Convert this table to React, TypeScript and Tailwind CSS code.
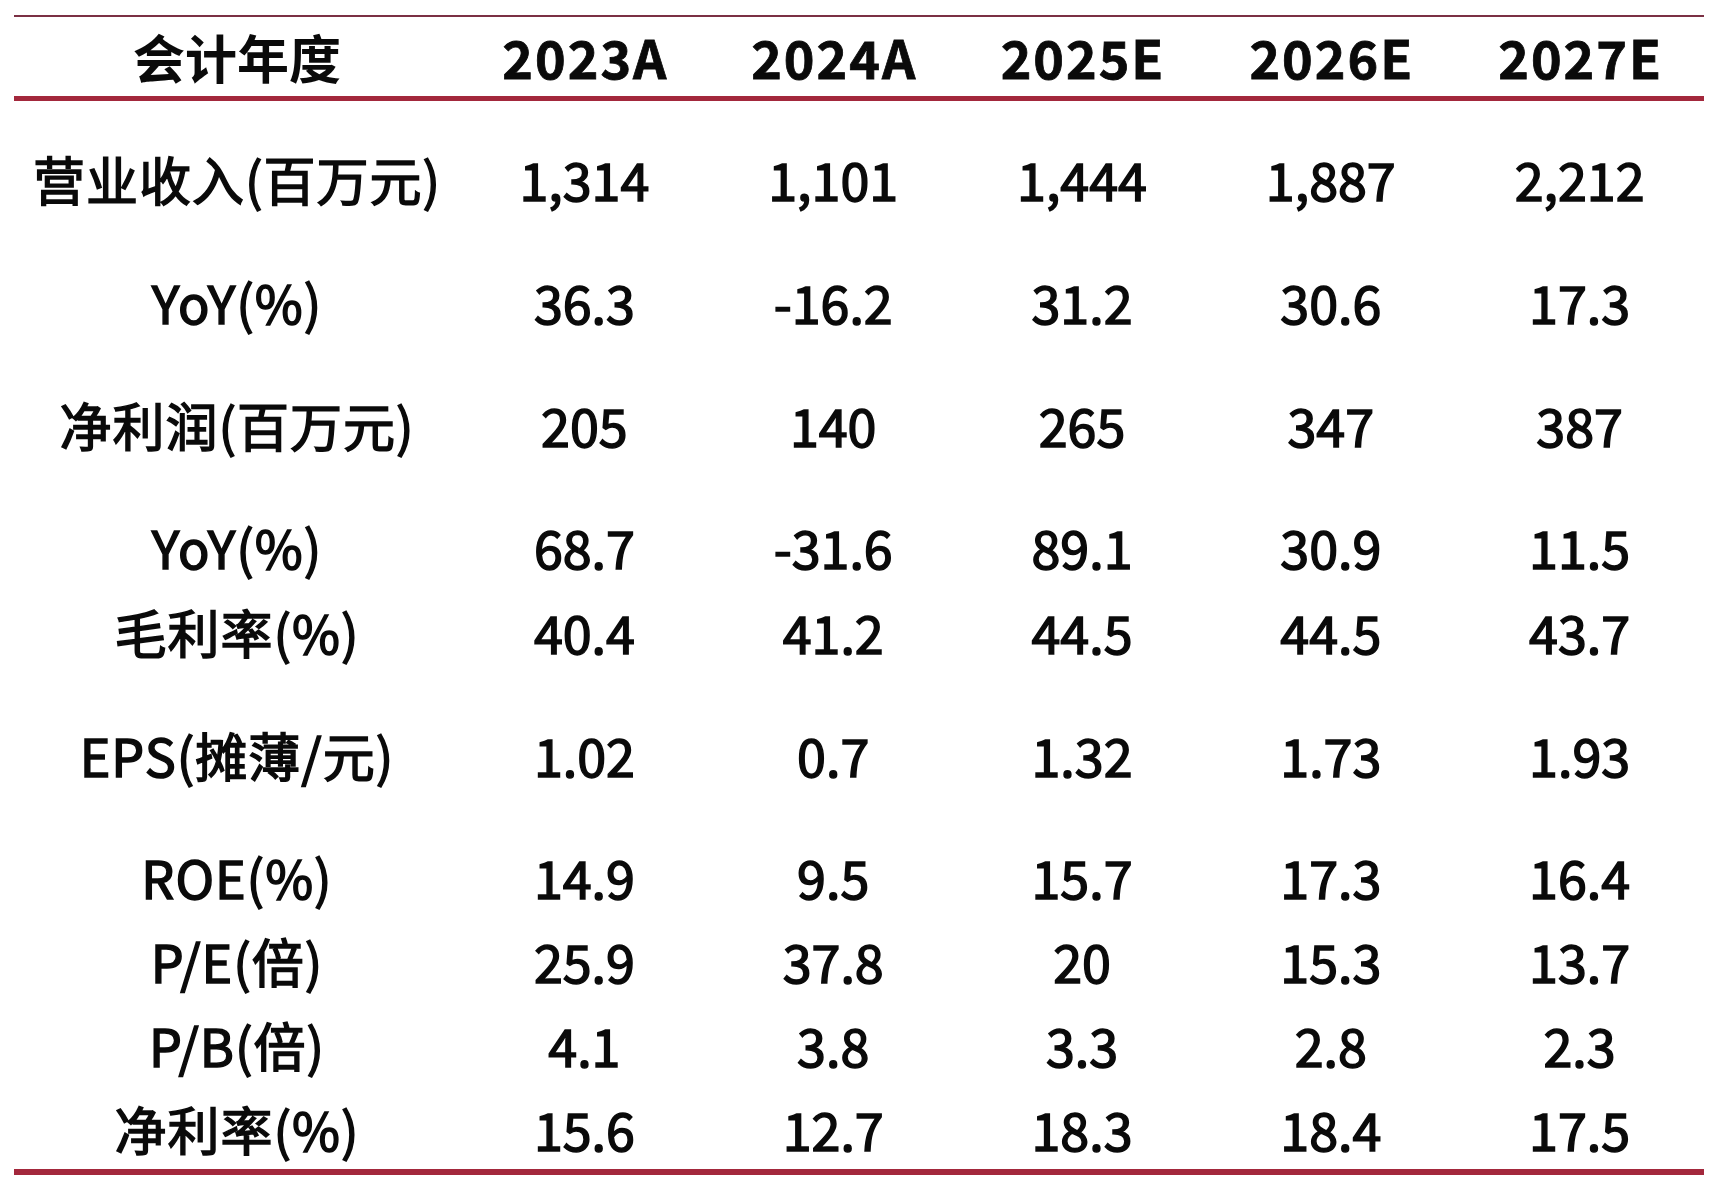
import React from 'react';

const years = ['2023A', '2024A', '2025E', '2026E', '2027E'];

// gap above each row varies in the source table
const rows = [
  { label: '营业收入(百万元)', values: ['1,314', '1,101', '1,444', '1,887', '2,212'], gap: 'mt-[46px]' },
  { label: 'YoY(%)', values: ['36.3', '-16.2', '31.2', '30.6', '17.3'], gap: 'mt-[51px]' },
  { label: '净利润(百万元)', values: ['205', '140', '265', '347', '387'], gap: 'mt-[51px]' },
  { label: 'YoY(%)', values: ['68.7', '-31.6', '89.1', '30.9', '11.5'], gap: 'mt-[50px]' },
  { label: '毛利率(%)', values: ['40.4', '41.2', '44.5', '44.5', '43.7'], gap: 'mt-[13px]' },
  { label: 'EPS(摊薄/元)', values: ['1.02', '0.7', '1.32', '1.73', '1.93'], gap: 'mt-[51px]' },
  { label: 'ROE(%)', values: ['14.9', '9.5', '15.7', '17.3', '16.4'], gap: 'mt-[50px]' },
  { label: 'P/E(倍)', values: ['25.9', '37.8', '20', '15.3', '13.7'], gap: 'mt-[12px]' },
  { label: 'P/B(倍)', values: ['4.1', '3.8', '3.3', '2.8', '2.3'], gap: 'mt-[12px]' },
  { label: '净利率(%)', values: ['15.6', '12.7', '18.3', '18.4', '17.5'], gap: 'mt-[12px]' },
];

const font = { fontFamily: '"Noto Sans CJK SC", "Noto Sans", sans-serif' };

export default function App() {
  return (
    <div className="w-[1719px] h-[1191px] bg-white pl-[14px] pr-[15px] pt-[15px] text-[#0a0a0a]" style={font}>
      {/* top rule */}
      <div className="h-[2px] bg-[#7b3044]" />

      {/* header */}
      <div className="grid grid-cols-[446px_repeat(5,minmax(0,1fr))] h-[79px] items-center text-[52px] font-bold leading-none">
        <div className="text-center">会计年度</div>
        {years.map((y) => (
          <div key={y} className="text-center tracking-[2px] pl-[2px] [-webkit-text-stroke:0.8px_#0a0a0a]">{y}</div>
        ))}
      </div>
      <div className="h-[5px] bg-[#a3283c]" />

      {/* body */}
      {rows.map((row, i) => (
        <div
          key={i}
          className={`grid grid-cols-[446px_repeat(5,minmax(0,1fr))] h-[72px] pb-[8px] items-center text-[52px] leading-none [-webkit-text-stroke:1.5px_#0a0a0a] ${row.gap}`}
        >
          <div className="text-center whitespace-nowrap tracking-[1px]">{row.label}</div>
          {row.values.map((v, j) => (
            <div key={j} className="text-center">{v}</div>
          ))}
        </div>
      ))}

      {/* bottom rule */}
      <div className="h-[6px] bg-[#a3283c]" />
    </div>
  );
}
